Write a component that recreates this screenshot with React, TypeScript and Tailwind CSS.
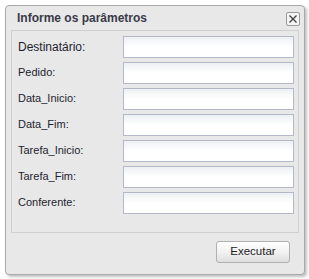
import React from 'react';

const fields = ['Pedido:', 'Data_Inicio:', 'Data_Fim:', 'Tarefa_Inicio:', 'Tarefa_Fim:', 'Conferente:'];

const Field = ({ label, big }: { label: string; big?: boolean }) => {
  return (
    <div className="flex items-center h-[22px]">
      <div className={`w-[106px] pl-[1px] pb-[1px] text-[#1e1e2e] ${big ? 'text-[12px]' : 'text-[11px]'}`}>{label}</div>
      <div className="w-[171px] h-[22px] border border-[#b5b8c8] bg-gradient-to-b from-[#edf0f3] via-white to-white" />
    </div>
  );
};

const App = () => {
  return (
    <div className="w-[309px] h-[279px] bg-white pt-[5px] pl-[5px]" style={{ fontFamily: '"Liberation Sans", Arial, sans-serif' }}>
      <div className="w-[300px] h-[270px] rounded-[4px] border border-[#a9a9a9] bg-[#e8e8e8] shadow-[2px_2px_3px_rgba(0,0,0,0.25)] flex flex-col px-[5px]">
        <div className="h-[24px] flex items-center justify-between pl-[6px]">
          <span className="text-[12px] font-bold text-[#3a3a48]">Informe os parâmetros</span>
          <div className="w-[14px] h-[14px] mr-[-1px] mt-[1px] rounded-[2px] border border-[#9a9a9a] bg-[#f4f4f4] flex items-center justify-center">
            <svg width="10" height="10" viewBox="0 0 10 10">
              <path d="M1.5 1.5 L8.5 8.5 M8.5 1.5 L1.5 8.5" stroke="#444" strokeWidth="1.4" />
            </svg>
          </div>
        </div>
        <div className="h-[203px] border border-[#cfcfcf] pl-[5px] pt-[5px] flex flex-col gap-[4px]">
          <Field label="Destinatário:" big />
          {fields.map((f) => (
            <Field key={f} label={f} />
          ))}
        </div>
        <div className="flex justify-end pr-[9px] pt-[8px]">
          <button className="w-[74px] h-[22px] rounded-[3px] border border-[#b0b0b0] bg-gradient-to-b from-white via-[#f2f2f2] to-[#dedede] text-[11.5px] text-[#222]">
            Executar
          </button>
        </div>
      </div>
    </div>
  );
};

export default App;
